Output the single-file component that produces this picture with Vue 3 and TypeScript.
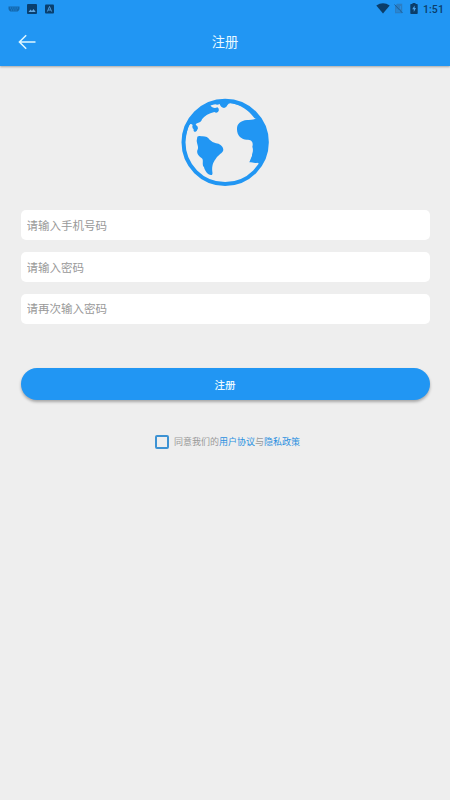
<script setup lang="ts">
import { ref } from 'vue'

interface Field {
  key: string
  type: string
  placeholder: string
  value: string
}

const fields = ref<Field[]>([
  { key: 'phone', type: 'tel', placeholder: '请输入手机号码', value: '' },
  { key: 'password', type: 'password', placeholder: '请输入密码', value: '' },
  { key: 'confirm', type: 'password', placeholder: '请再次输入密码', value: '' },
])
const agreed = ref(false)
</script>

<template>
  <main class="screen">
    <header class="top">
      <div class="status">
        <div class="status-left">
          <svg class="keyboard" width="12" height="8" viewBox="0 0 12 8">
            <path d="M.5 1.5h11v2.2Q11 6.5 8.5 6.5h-5Q1 6.5.5 3.7z" fill="#0d4e86" opacity=".65" />
            <path d="M2 3h8M3 5h6" stroke="#2196f3" stroke-width=".8" stroke-dasharray="1 .8" />
          </svg>
          <svg class="picture" width="10" height="10" viewBox="0 0 10 10">
            <rect width="10" height="10" rx="1" fill="#093f6f" />
            <path d="M1.5 8 3.5 5.6 5 7l1.5-2L8.7 8z" fill="#62a9e4" />
          </svg>
          <svg class="letter" width="9" height="10" viewBox="0 0 9 10">
            <rect y=".5" width="9" height="9" rx="1" fill="#093f6f" />
            <path d="M2.4 7.5 4.5 2.5l2.1 5M3.2 6h2.6" fill="none" stroke="#4d9de0" stroke-width="1" />
          </svg>
        </div>
        <div class="status-right">
          <svg class="wifi" width="14" height="11" viewBox="0 0 14 11">
            <path d="M.3 2.5Q7-2 13.7 2.5L7 10.5z" fill="#0b3d69" />
          </svg>
          <svg class="sim" width="9" height="11" viewBox="0 0 9 11">
            <path d="M3 .8h5.2v9.4H1V3z" fill="#2b7ec4" />
            <path d="M.5 1.5 8.5 10" stroke="#1b5f9a" stroke-width="1" />
            <path d="M3 6v3M5 7v2M6.5 3v3" stroke="#2196f3" stroke-width=".7" />
          </svg>
          <svg class="battery" width="8" height="11" viewBox="0 0 8 11">
            <path d="M2.5 0h3v1H7q.7 0 .7.7v8.6q0 .7-.7.7H1q-.7 0-.7-.7V1.7Q.3 1 1 1h1.5z" fill="#0b3d69" />
            <path d="M4.6 2.5 2.2 6.2h1.6v2.7l2.2-3.8H4.6z" fill="#4aa5ef" />
          </svg>
          <time>1:51</time>
        </div>
      </div>
      <div class="nav">
        <button class="back" type="button" aria-label="返回">
          <svg width="18" height="16" viewBox="0 0 18 16" fill="none" stroke="#dff7ff" stroke-width="1.5">
            <path d="M17.5 8H1.5M8.2 1.2 1.4 8l6.8 6.8" />
          </svg>
        </button>
        <h1>注册</h1>
        <span></span>
      </div>
    </header>

    <svg class="globe" width="100" height="100" viewBox="0 0 300 300" fill="#2196f3">
      <circle cx="150.5" cy="151" r="125" fill="none" stroke="#2196f3" stroke-width="12" />
      <path d="M27 132A124 124 0 0 1 150 27C185 27 219 43 240 66L245 79Q243 82 238 78C219 53 196 38 166 33Q160 34 157 40 154 48 147 48 137 47 134 36 127 40 121 37 112 34 107 38 105 43 112 46 120 50 127 46 133 49 131 57 126 65 118 60 93 66 81 82 79 91 70 92 63 93 62 98 69 102 69 109 66 119 60 120 54 118 56 112 50 107 53 99 47 92 42 100 36 113 33 132Z" />
      <path d="M67 134Q71 130 80 133 97 132 104 143 112 151 123 154C133 154 145 163 145 174 143 184 129 188 122 201 114 212 110 222 112 239Q114 249 108 249C98 248 90 238 87 226 80 217 86 208 82 200 73 194 64 186 67 175 74 165 62 151 66 141Z" />
      <path d="M244 78Q238 85 216 84C197 86 186 95 186 110 185 131 200 143 215 143 229 143 236 149 232 164 237 178 230 185 231 192 228 197 226 204 223 211 232 211 239 215 247 212L254 216 257 217C278 190 283 155 274 120 269 99 260 81 246 66L240 72Z" />
    </svg>

    <form @submit.prevent>
      <div class="fields">
        <input
          v-for="field in fields"
          :key="field.key"
          v-model="field.value"
          :type="field.type"
          :placeholder="field.placeholder"
        />
      </div>
      <button class="submit" type="submit">注册</button>
      <label class="agreement">
        <input v-model="agreed" type="checkbox" />
        <span>同意我们的<a>用户协议</a>与<a>隐私政策</a></span>
      </label>
    </form>
  </main>
</template>

<style>
body {
  background: #eee;
}
</style>

<style scoped>
.screen {
  min-height: 800px;
  background: #eee;
  font-family: Roboto, "Noto Sans CJK SC", sans-serif;
  display: flex;
  flex-direction: column;
}
.screen * {
  box-sizing: border-box;
}
.top {
  height: 66px;
  background: #2196f3;
  box-shadow: 0 1px 2px rgba(0, 0, 0, 0.3);
}
.status {
  height: 18px;
  padding: 0 6px 0 8px;
  display: flex;
  justify-content: space-between;
}
.status-left,
.status-right {
  display: flex;
  align-items: center;
}
.picture {
  margin-left: 7px;
}
.letter {
  margin-left: 8px;
}
.status-right {
  height: 17px;
}
.sim {
  margin-left: 4px;
}
.battery {
  margin-left: 7px;
}
time {
  margin-left: 5px;
  padding-top: 1px;
  color: #0b3d69;
  font-size: 10.5px;
  font-weight: 500;
  letter-spacing: 0.1px;
}
.nav {
  height: 48px;
  display: grid;
  grid-template-columns: 54px 1fr 54px;
  align-items: center;
}
.back {
  height: 48px;
  padding: 0 0 0 18px;
  border: 0;
  background: none;
  display: flex;
  align-items: center;
}
h1 {
  margin: 0;
  padding-top: 2px;
  color: #eaf9ff;
  font-size: 13.3px;
  font-weight: 400;
  line-height: 20px;
  text-align: center;
}
.globe {
  display: block;
  margin: 26px auto 0;
}
form {
  margin: 18px 20.5px 0;
  display: flex;
  flex-direction: column;
}
.fields {
  display: flex;
  flex-direction: column;
  gap: 11.75px;
}
.fields input {
  width: 100%;
  height: 30px;
  padding: 2px 6px 0;
  border: 0;
  border-radius: 5px;
  outline: 0;
  background: #fff;
  color: #333;
  font: 11.5px Roboto, "Noto Sans CJK SC", sans-serif;
}
.fields input:last-child {
  padding-top: 1px;
}
.fields input::placeholder {
  color: #999;
  opacity: 1;
}
.submit {
  height: 32px;
  margin-top: 44.5px;
  padding: 0;
  border: 0;
  border-radius: 16px;
  background: #2196f3;
  box-shadow: 0 2px 3px rgba(0, 0, 0, 0.3);
  color: #eaf9ff;
  font: 500 10.5px Roboto, "Noto Sans CJK SC", sans-serif;
}
.agreement {
  height: 14px;
  margin: 35px 0 0 134.5px;
  display: flex;
  align-items: center;
  gap: 5px;
  color: #999;
  font-size: 9px;
  line-height: 14px;
  white-space: nowrap;
}
.agreement input {
  appearance: none;
  width: 14px;
  height: 14px;
  margin: 0;
  border: 2px solid #3d92d3;
  border-radius: 2px;
}
.agreement input:checked {
  background: #2196f3;
}
.agreement a {
  color: #2b90e0;
}
</style>
